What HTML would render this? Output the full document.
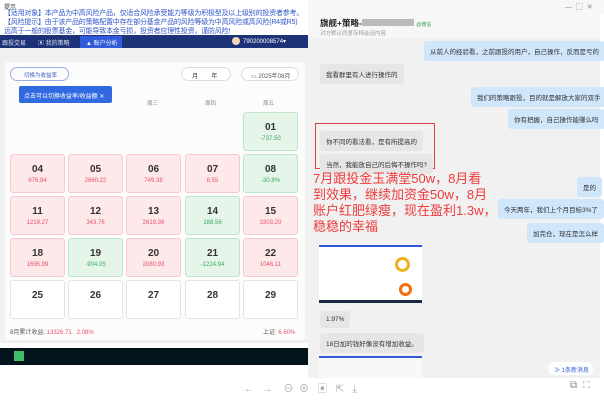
<!DOCTYPE html><html><head><meta charset="utf-8"><style>
*{margin:0;padding:0;box-sizing:border-box}
body{width:604px;height:400px;overflow:hidden;background:#fff;font-family:"Liberation Sans","Noto Sans CJK SC",sans-serif;position:relative}
.a{position:absolute}
.c{position:absolute;width:55px;height:39px;border-radius:3px;text-align:center}
.r{background:#fde8ea;border:1px solid #f8c8cd}
.g{background:#e6f5ea;border:1px solid #bfe5c9}
.w{background:#fff;border:1px solid #e4e4e4}
.c b{display:block;font-size:10px;color:#333;margin-top:9px}
.c i{display:block;font-style:normal;font-size:6px;margin-top:3px}
.r i{color:#e8506a}.g i{color:#3aa65a}
.bub{position:absolute;font-size:6.5px;color:#333;padding:5px 6px;border-radius:3px;white-space:nowrap}
.me{background:#cfe6fb}.ot{background:#e6e6e6}
.t{white-space:nowrap;display:block}
</style></head><body>
<div class="a" style="left:4px;top:2px;font-size:6px;color:#333">提示</div>
<div class="a" style="left:4px;top:9px;font-size:7px;line-height:9px;color:#2f55c8;letter-spacing:-0.2px"><span class="t">【适用对象】本产品为中高风险产品，仅适合风险承受能力等级为积极型及以上级别的投资者参考。</span><span class="t">【风险提示】由于该产品的策略配置中存在部分基金产品的风险等级为中高风险或高风险(R4或R5)</span><span class="t">远高于一般的股票基金，可能导致本金亏损，投资者应理性投资，谨防风险!</span></div>
<div class="a" style="left:0;top:35px;width:308px;height:13px;background:#1d3378"></div>
<div class="a" style="left:80px;top:36px;width:42px;height:12px;background:#2f5bd8"></div>
<div class="a" style="left:2px;top:38px;font-size:6px;color:#dde">跟投交易</div>
<div class="a" style="left:38px;top:38px;font-size:6px;color:#dde">▣ 我的策略</div>
<div class="a" style="left:86px;top:38px;font-size:6px;color:#fff">▲ 账户分析</div>
<div class="a" style="left:232px;top:37px;width:8px;height:8px;border-radius:50%;background:#f3d7b8"></div>
<div class="a" style="left:243px;top:38px;font-size:6px;color:#fff">790200008574▾</div>
<div class="a" style="left:0;top:48px;width:308px;height:295px;background:#f0f0f0"></div>
<div class="a" style="left:5px;top:62px;width:300px;height:278px;background:#fcfcfc;border-radius:3px"></div>
<div class="a" style="left:10px;top:67px;width:59px;height:14px;border:1px solid #9ab0e6;border-radius:8px;font-size:5.5px;color:#3a5bc8;padding:3px 0 0 13px">切换为收益率</div>
<div class="a" style="left:181px;top:67px;width:50px;height:14px;border:1px solid #ddd;border-radius:8px;background:#fff;font-size:6px;color:#333;padding:3px 0 0 10px">月&nbsp;&nbsp;&nbsp;&nbsp;&nbsp;&nbsp;&nbsp;&nbsp;年</div>
<div class="a" style="left:241px;top:67px;width:58px;height:14px;border:1px solid #ddd;border-radius:8px;background:#fff;font-size:6px;color:#555;padding:3px 0 0 9px">▭ 2025年08月</div>
<div class="a" style="left:19px;top:86px;width:93px;height:17px;background:#3069e0;border-radius:2px;font-size:6px;color:#fff;padding:5px 0 0 5px">点击可以切换收益率/收益额 ✕</div>
<div class="a" style="left:147px;top:99px;font-size:5.5px;color:#888">周三</div>
<div class="a" style="left:205px;top:99px;font-size:5.5px;color:#888">周四</div>
<div class="a" style="left:263px;top:99px;font-size:5.5px;color:#888">周五</div>
<div class="c g" style="left:243px;top:112px"><b>01</b><i>-737.50</i></div>
<div class="c r" style="left:10px;top:154px"><b>04</b><i>676.84</i></div>
<div class="c r" style="left:68px;top:154px"><b>05</b><i>2660.22</i></div>
<div class="c r" style="left:126px;top:154px"><b>06</b><i>749.38</i></div>
<div class="c r" style="left:185px;top:154px"><b>07</b><i>8.55</i></div>
<div class="c g" style="left:243px;top:154px"><b>08</b><i>-30.8%</i></div>
<div class="c r" style="left:10px;top:196px"><b>11</b><i>1219.27</i></div>
<div class="c r" style="left:68px;top:196px"><b>12</b><i>343.76</i></div>
<div class="c r" style="left:126px;top:196px"><b>13</b><i>2619.36</i></div>
<div class="c g" style="left:185px;top:196px"><b>14</b><i>188.56</i></div>
<div class="c r" style="left:243px;top:196px"><b>15</b><i>3303.20</i></div>
<div class="c r" style="left:10px;top:238px"><b>18</b><i>1695.99</i></div>
<div class="c g" style="left:68px;top:238px"><b>19</b><i>-904.05</i></div>
<div class="c r" style="left:126px;top:238px"><b>20</b><i>2080.93</i></div>
<div class="c g" style="left:185px;top:238px"><b>21</b><i>-1224.94</i></div>
<div class="c r" style="left:243px;top:238px"><b>22</b><i>1046.11</i></div>
<div class="c w" style="left:10px;top:280px"><b>25</b></div>
<div class="c w" style="left:68px;top:280px"><b>26</b></div>
<div class="c w" style="left:126px;top:280px"><b>27</b></div>
<div class="c w" style="left:185px;top:280px"><b>28</b></div>
<div class="c w" style="left:243px;top:280px"><b>29</b></div>
<div class="a" style="left:10px;top:327px;font-size:6px;color:#555">8月累计收益: <span style="color:#e8506a">13326.71 &nbsp;&nbsp;2.08%</span></div>
<div class="a" style="left:263px;top:327px;font-size:6px;color:#555">上证: <span style="color:#e8506a">6.60%</span></div>
<div class="a" style="left:0;top:348px;width:310px;height:17px;background:#04141c"></div>
<div class="a" style="left:14px;top:351px;width:10px;height:10px;background:#3bbf6a"></div>
<div class="a" style="left:244px;top:380px;font-size:10px;color:#aaa">←&nbsp;&nbsp;&nbsp;→&nbsp;&nbsp;&nbsp;&nbsp;⊖&nbsp;&nbsp;⊕&nbsp;&nbsp;&nbsp;▣&nbsp;&nbsp;&nbsp;⇱&nbsp;&nbsp;&nbsp;⤓</div>
<div class="a" style="left:570px;top:380px;font-size:10px;color:#888">⧉&nbsp;&nbsp;⛶</div>
<div class="a" style="left:308px;top:0;width:296px;height:14px;background:#f7f7f7"></div>
<div class="a" style="left:565px;top:2px;font-size:7px;color:#888">—&nbsp;&nbsp;▢&nbsp;&nbsp;✕</div>
<div class="a" style="left:308px;top:14px;width:292px;height:24px;background:#f7f7f7"></div>
<div class="a" style="left:320px;top:17px;font-size:8.5px;font-weight:bold;color:#222">旗舰+策略-<span style="display:inline-block;width:52px;height:7px;background:#bbb"></span> <span style="font-size:5px;color:#3aa65a;font-weight:normal">@微信</span></div>
<div class="a" style="left:320px;top:29px;font-size:5.5px;color:#999">对方默认同意存档会话内容</div>
<div class="a" style="left:308px;top:38px;width:292px;height:340px;background:#f1f1f1"></div>
<div class="bub me" style="left:424px;top:41px">从前人的经验看，之前跟投的用户，自己操作，反而是亏的</div>
<div class="bub ot" style="left:320px;top:64px">我看群里有人进行操作的</div>
<div class="bub me" style="left:471px;top:87px">我们的策略跟投，目的就是解放大家的双手</div>
<div class="bub me" style="left:508px;top:109px">你有把握，自己操作能赚么吗</div>
<div class="a" style="left:315px;top:123px;width:120px;height:46px;border:1px solid #e04040"></div>
<div class="bub ot" style="left:320px;top:131px">你不同的看法看，是有所提高的</div>
<div class="bub ot" style="left:320px;top:154px">当然，我能放自己的后悔不操作吗?</div>
<div class="a" style="left:313px;top:171px;font-size:13px;line-height:16px;color:#ee3b3b"><span class="t">7月跟投金玉满堂50w，8月看</span><span class="t">到效果，继续加资金50w，8月</span><span class="t">账户红肥绿瘦，现在盈利1.3w，</span><span class="t">稳稳的幸福</span></div>
<div class="bub me" style="left:577px;top:177px">是的</div>
<div class="bub me" style="left:498px;top:199px">今天两年，我们上个月目标3%了</div>
<div class="bub me" style="left:527px;top:223px">加完仓，现在是怎么样</div>
<div class="a" style="left:319px;top:245px;width:103px;height:58px;background:#fff;border-top:2px solid #2f5bd8;border-bottom:3px solid #1a2a40"></div>
<div class="a" style="left:395px;top:257px;width:15px;height:15px;border-radius:50%;border:3px solid #f0b020"></div>
<div class="a" style="left:399px;top:283px;width:13px;height:13px;border-radius:50%;border:3px solid #f07010"></div>
<div class="bub ot" style="left:320px;top:311px">1.97%</div>
<div class="bub ot" style="left:320px;top:333px">18日加的钱好像没有增加收益。</div>
<div class="a" style="left:319px;top:356px;width:103px;height:22px;background:#f8f8f8;border-top:2px solid #2f5bd8"></div>
<div class="a" style="left:548px;top:362px;width:45px;height:13px;background:#fff;border-radius:7px;font-size:6px;color:#2f5bd8;padding:3px 0 0 6px">≫ 1条新消息</div>
</body></html>
